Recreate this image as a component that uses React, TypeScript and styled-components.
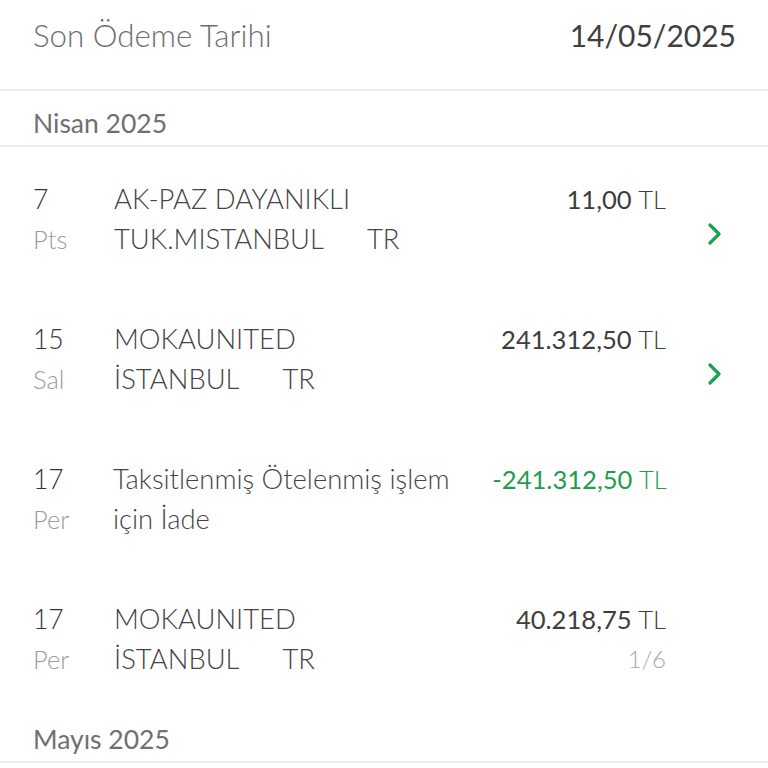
import React from "react";
import styled, { createGlobalStyle } from "styled-components";

const Global = createGlobalStyle`
  html, body { margin: 0; padding: 0; background: #fff; }
  body { font-family: Lato, "Noto Sans", sans-serif; -webkit-font-smoothing: antialiased; }
`;

const Page = styled.div`
  width: 768px;
  background: #fff;
`;

const TopBar = styled.div`
  height: 91px;
  display: flex;
  justify-content: space-between;
  align-items: flex-start;
  padding: 14px 32px 0 33px;
  box-sizing: border-box;
  border-bottom: 2px solid #eeeeee;
`;

const TopLabel = styled.span`
  font-size: 31.3px;
  line-height: 42px;
  font-weight: 300;
  color: #6e6e6e;
`;

const TopValue = styled.span`
  font-size: 30px;
  line-height: 42px;
  color: #3f3f3f;
  font-weight: 400;
`;

const MonthHeader = styled.div`
  height: 56px;
  box-sizing: border-box;
  padding: 14px 33px 0;
  font-size: 26.5px;
  line-height: 36px;
  font-weight: 400;
  color: #707070;
  border-bottom: 2px solid #eeeeee;
`;

const Row = styled.div`
  display: flex;
  align-items: flex-start;
  padding: 32px 0 28px 33px;
`;

const DayCol = styled.div`
  width: 81px;
  display: flex;
  flex-direction: column;
`;

const Day = styled.span`
  font-size: 26.5px;
  line-height: 40px;
  font-weight: 300;
  color: #333;
`;

const Weekday = styled.span`
  font-size: 25.5px;
  line-height: 40px;
  font-weight: 300;
  color: #9c9c9c;
`;

const Desc = styled.div`
  flex: 1;
  font-size: 27.4px;
  line-height: 40px;
  font-weight: 300;
  color: #444;
`;

const DescLine = styled.div`
  white-space: nowrap;
`;

const Country = styled.span`
  margin-left: 43px;
`;

const AmountCol = styled.div`
  display: flex;
  flex-direction: column;
  align-items: flex-end;
  width: 220px;
`;

const Amount = styled.span<{ $credit?: boolean }>`
  font-size: 25.6px;
  line-height: 40px;
  font-weight: 400;
  color: ${(p) => (p.$credit ? "#1f9d4f" : "#3d3d3d")};
  white-space: nowrap;
`;

const Currency = styled.span`
  font-weight: 300;
`;

const Installment = styled.span`
  font-size: 24px;
  line-height: 40px;
  font-weight: 300;
  color: #a6a6a6;
`;

const ArrowCol = styled.div`
  width: 102px;
  display: flex;
  justify-content: flex-start;
  padding: 44px 0 0 41px;
  box-sizing: border-box;
`;

const Chevron = () => (
  <svg width="16" height="22" viewBox="0 0 16 22" fill="none">
    <path d="M3 2l9 9-9 9" stroke="#1aa251" strokeWidth="3.2" strokeLinecap="round" strokeLinejoin="round" />
  </svg>
);

type Tx = {
  day: string;
  wd: string;
  lines: string[];
  country?: string;
  amount: string;
  credit?: boolean;
  inst?: string;
  arrow?: boolean;
};

const txs: Tx[] = [
  { day: "7", wd: "Pts", lines: ["AK-PAZ DAYANIKLI", "TUK.MISTANBUL"], country: "TR", amount: "11,00", arrow: true },
  { day: "15", wd: "Sal", lines: ["MOKAUNITED", "İSTANBUL"], country: "TR", amount: "241.312,50", arrow: true },
  { day: "17", wd: "Per", lines: ["Taksitlenmiş Ötelenmiş işlem", "için İade"], amount: "-241.312,50", credit: true },
  { day: "17", wd: "Per", lines: ["MOKAUNITED", "İSTANBUL"], country: "TR", amount: "40.218,75", inst: "1/6" },
];

export default function App() {
  return (
    <Page>
      <Global />
      <TopBar>
        <TopLabel>Son Ödeme Tarihi</TopLabel>
        <TopValue>14/05/2025</TopValue>
      </TopBar>
      <MonthHeader>Nisan 2025</MonthHeader>
      {txs.map((t, i) => (
        <Row key={i}>
          <DayCol>
            <Day>{t.day}</Day>
            <Weekday>{t.wd}</Weekday>
          </DayCol>
          <Desc>
            {t.lines.map((l, j) => (
              <DescLine key={j}>
                {l}
                {j === 1 && t.country && <Country>{t.country}</Country>}
              </DescLine>
            ))}
          </Desc>
          <AmountCol>
            <Amount $credit={t.credit}>
              {t.amount} <Currency>TL</Currency>
            </Amount>
            {t.inst && <Installment>{t.inst}</Installment>}
          </AmountCol>
          <ArrowCol>{t.arrow && <Chevron />}</ArrowCol>
        </Row>
      ))}
      <MonthHeader>Mayıs 2025</MonthHeader>
    </Page>
  );
}
